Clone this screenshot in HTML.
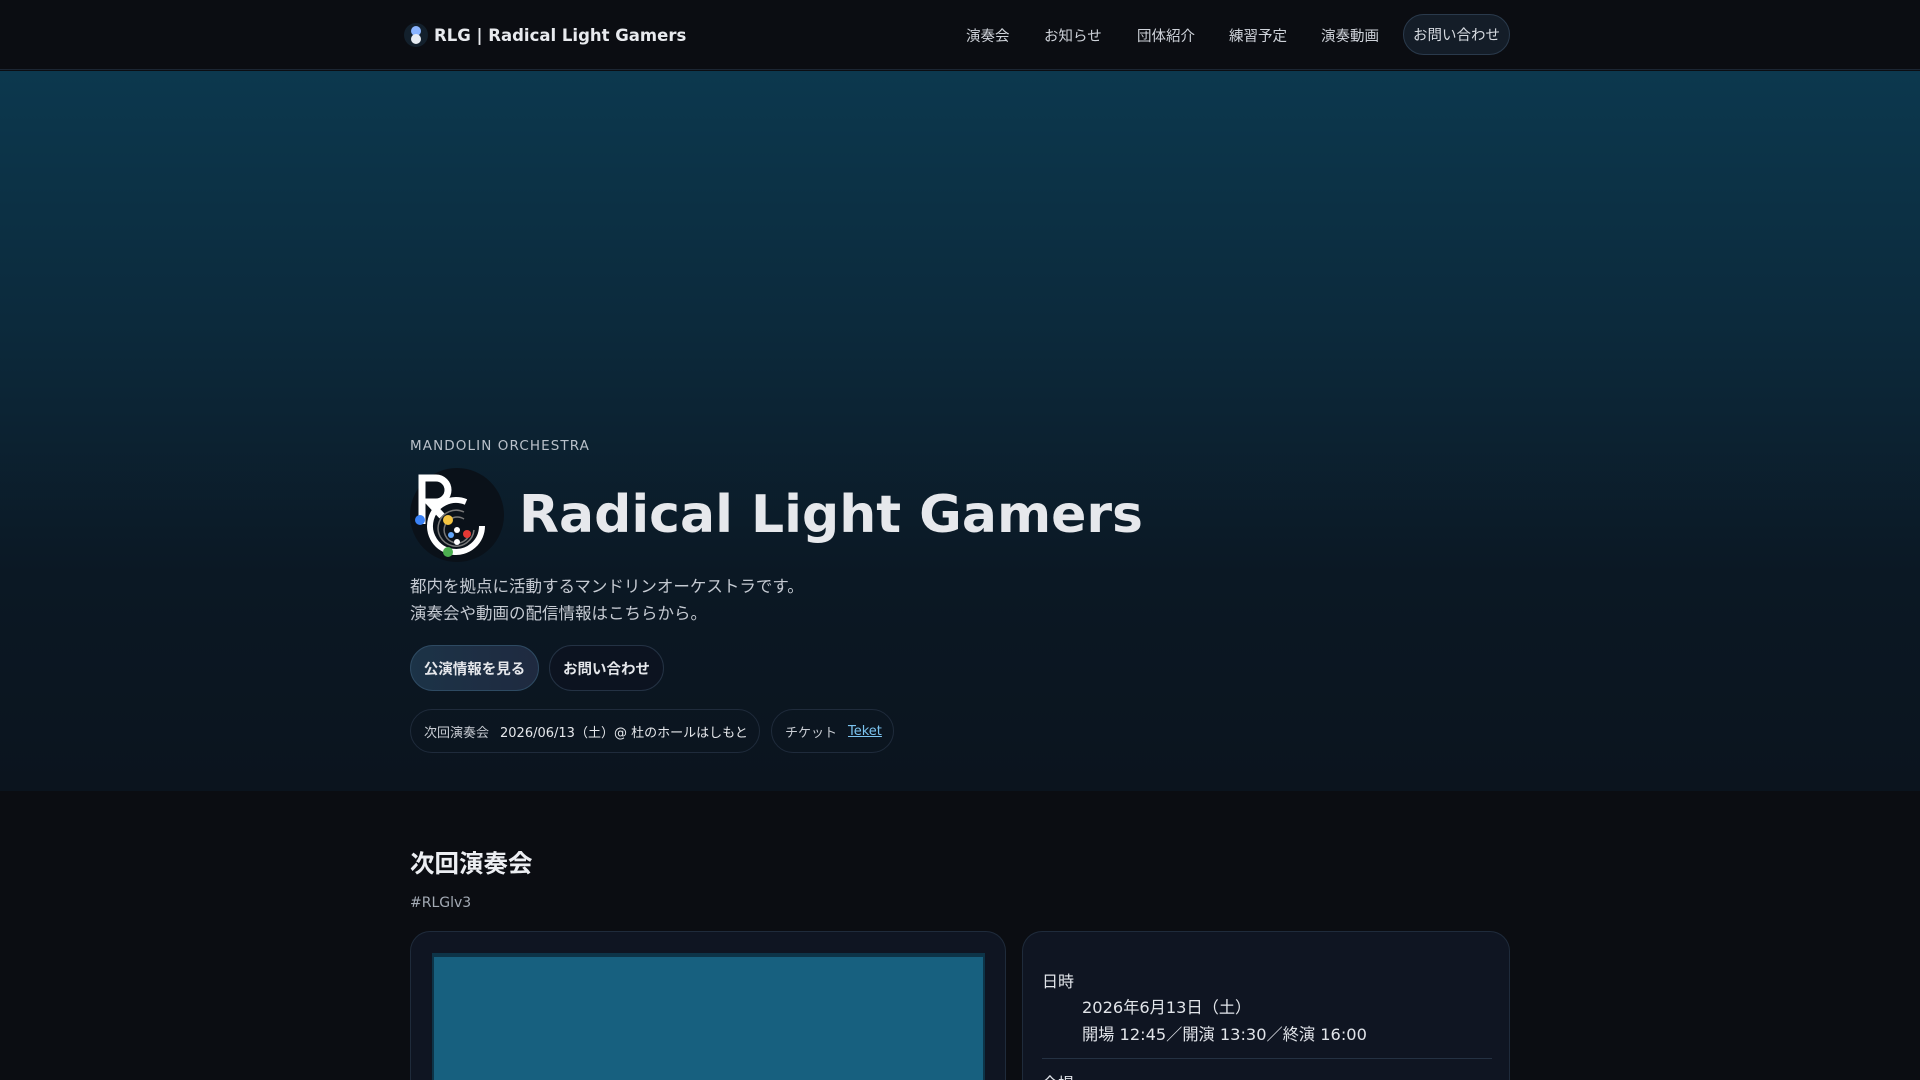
<!DOCTYPE html>
<html><head><meta charset="utf-8"><style>
*{box-sizing:border-box;margin:0;padding:0}
html,body{width:1920px;height:1080px;overflow:hidden}
body{background:#0b0d12;font-family:"DejaVu Sans","Liberation Sans","Noto Sans CJK JP",sans-serif;color:#e5e7eb}
#wrap{position:relative;width:1920px;height:1080px;overflow:hidden}
nav{position:absolute;top:0;left:0;width:1920px;height:70px;background:#0b0d12;border-bottom:1px solid #1c2633}
.brand{position:absolute;left:404px;top:23px;display:flex;align-items:center;font-weight:bold;font-size:16.5px;color:#e8eaee}
.bl{width:24px;height:24px;border-radius:50%;background:#13202c;position:relative;margin-right:6px}
.bl i{position:absolute;left:7px;width:10px;height:10px;border-radius:50%}
.links a{position:absolute;top:25px;font-size:14.5px;color:#cfd3da;text-decoration:none;white-space:nowrap}
.cbtn{position:absolute;left:1403px;top:14px;width:107px;height:41px;border:1px solid #2a3a4c;border-radius:21px;background:#141d28;font-size:14.5px;color:#d6dae0;display:flex;align-items:center;justify-content:center}
.hero{position:absolute;top:71px;left:0;width:1920px;height:720px;background:linear-gradient(180deg,#0c384e 0%,#0c2a3c 35%,#0b1824 70%,#0b141e 100%)}
.abs{position:absolute}
.btn{position:absolute;top:645px;height:46px;border-radius:23px;border:1px solid #243244;display:flex;align-items:center;justify-content:center;font-size:14.5px;font-weight:bold;color:#e5e7eb}
.pill{position:absolute;top:709px;height:44px;border-radius:22px;border:1px solid #1f2b3b;display:flex;align-items:center;padding-left:13px;font-size:13px;color:#c9cdd4;white-space:nowrap}
.card{position:absolute;top:931px;height:149px;border:1px solid #1f2b3b;border-bottom:none;border-radius:20px 20px 0 0;background:#0f1522;overflow:hidden}
</style></head><body><div id="wrap">
<nav>
<div class="brand"><div class="bl"><i style="top:3px;background:#8ab4ff"></i><i style="top:11px;background:#e8ecf2"></i></div>RLG | Radical Light Gamers</div>
<div class="links">
<a style="left:966px">演奏会</a><a style="left:1044px">お知らせ</a><a style="left:1137px">団体紹介</a><a style="left:1229px">練習予定</a><a style="left:1321px">演奏動画</a>
</div>
<div class="cbtn">お問い合わせ</div>
</nav>
<div class="hero"></div>
<div class="abs" style="left:410px;top:438px;font-size:13.5px;letter-spacing:1.1px;color:#b9c0c9">MANDOLIN ORCHESTRA</div>
<svg class="abs" style="left:410px;top:468px" width="94" height="94" viewBox="0 0 94 94">
<circle cx="47" cy="47" r="47" fill="#0a1119"/>
<path d="M12 56 V10 H26 a12 12 0 0 1 0 24 H19 L32 48" fill="none" stroke="#fff" stroke-width="7"/>
<path d="M72 58 a26 26 0 1 1 -16 -24" fill="none" stroke="#fff" stroke-width="6"/>
<path d="M64 62 a18 18 0 1 1 -10 -18" fill="none" stroke="#777" stroke-width="1.5"/>
<path d="M60 64 a13 13 0 1 1 -6 -13" fill="none" stroke="#777" stroke-width="1.5"/>
<circle cx="10" cy="52" r="5" fill="#3b82f6"/><circle cx="38" cy="52" r="5" fill="#f5c542"/>
<circle cx="38" cy="84" r="5" fill="#4caf50"/><circle cx="57" cy="66" r="4" fill="#e53935"/>
<circle cx="47" cy="62" r="3" fill="#fff"/><circle cx="47" cy="74" r="3" fill="#fff"/><circle cx="41" cy="67" r="3" fill="#60a5fa"/>
</svg>
<div class="abs" style="left:519px;top:485px;font-size:52px;font-weight:bold;color:#e6e8ec;white-space:nowrap">Radical Light Gamers</div>
<div class="abs" style="left:410px;top:573px;font-size:16.5px;line-height:27px;color:#c5cad2">都内を拠点に活動するマンドリンオーケストラです。<br>演奏会や動画の配信情報はこちらから。</div>
<div class="btn" style="left:410px;width:129px;background:linear-gradient(90deg,#1c3347,#1f2a40);border-color:#2e4a62">公演情報を見る</div>
<div class="btn" style="left:549px;width:115px;background:#0c1320">お問い合わせ</div>
<div class="pill" style="left:410px;width:350px">次回演奏会<span style="margin-left:11px;color:#e5e7eb">2026/06/13（土）@ 杜のホールはしもと</span></div>
<div class="pill" style="left:771px;width:123px">チケット<span style="margin-left:11px;color:#7cc4f0;text-decoration:underline">Teket</span></div>
<div class="abs" style="left:410px;top:845px;font-size:24.5px;font-weight:bold;color:#eceef2">次回演奏会</div>
<div class="abs" style="left:410px;top:895px;font-size:14px;color:#a4abb5">#RLGlv3</div>
<div class="card" style="left:410px;width:596px"><div style="position:absolute;left:21px;top:21px;width:553px;height:140px;background:#17607f;border:2px solid #0d3448;border-top-width:4px"></div></div>
<div class="card" style="left:1022px;width:488px">
<div style="position:absolute;left:19px;top:36px;font-size:16px;color:#e1e4e9">日時</div>
<div style="position:absolute;left:59px;top:62px;font-size:16.2px;line-height:27px;color:#e1e4e9">2026年6月13日（土）<br>開場 12:45／開演 13:30／終演 16:00</div>
<div style="position:absolute;left:19px;top:126px;width:450px;height:1px;background:#243142"></div>
<div style="position:absolute;left:19px;top:138px;font-size:16px;color:#e1e4e9">会場</div>
</div>
</div></body></html>
